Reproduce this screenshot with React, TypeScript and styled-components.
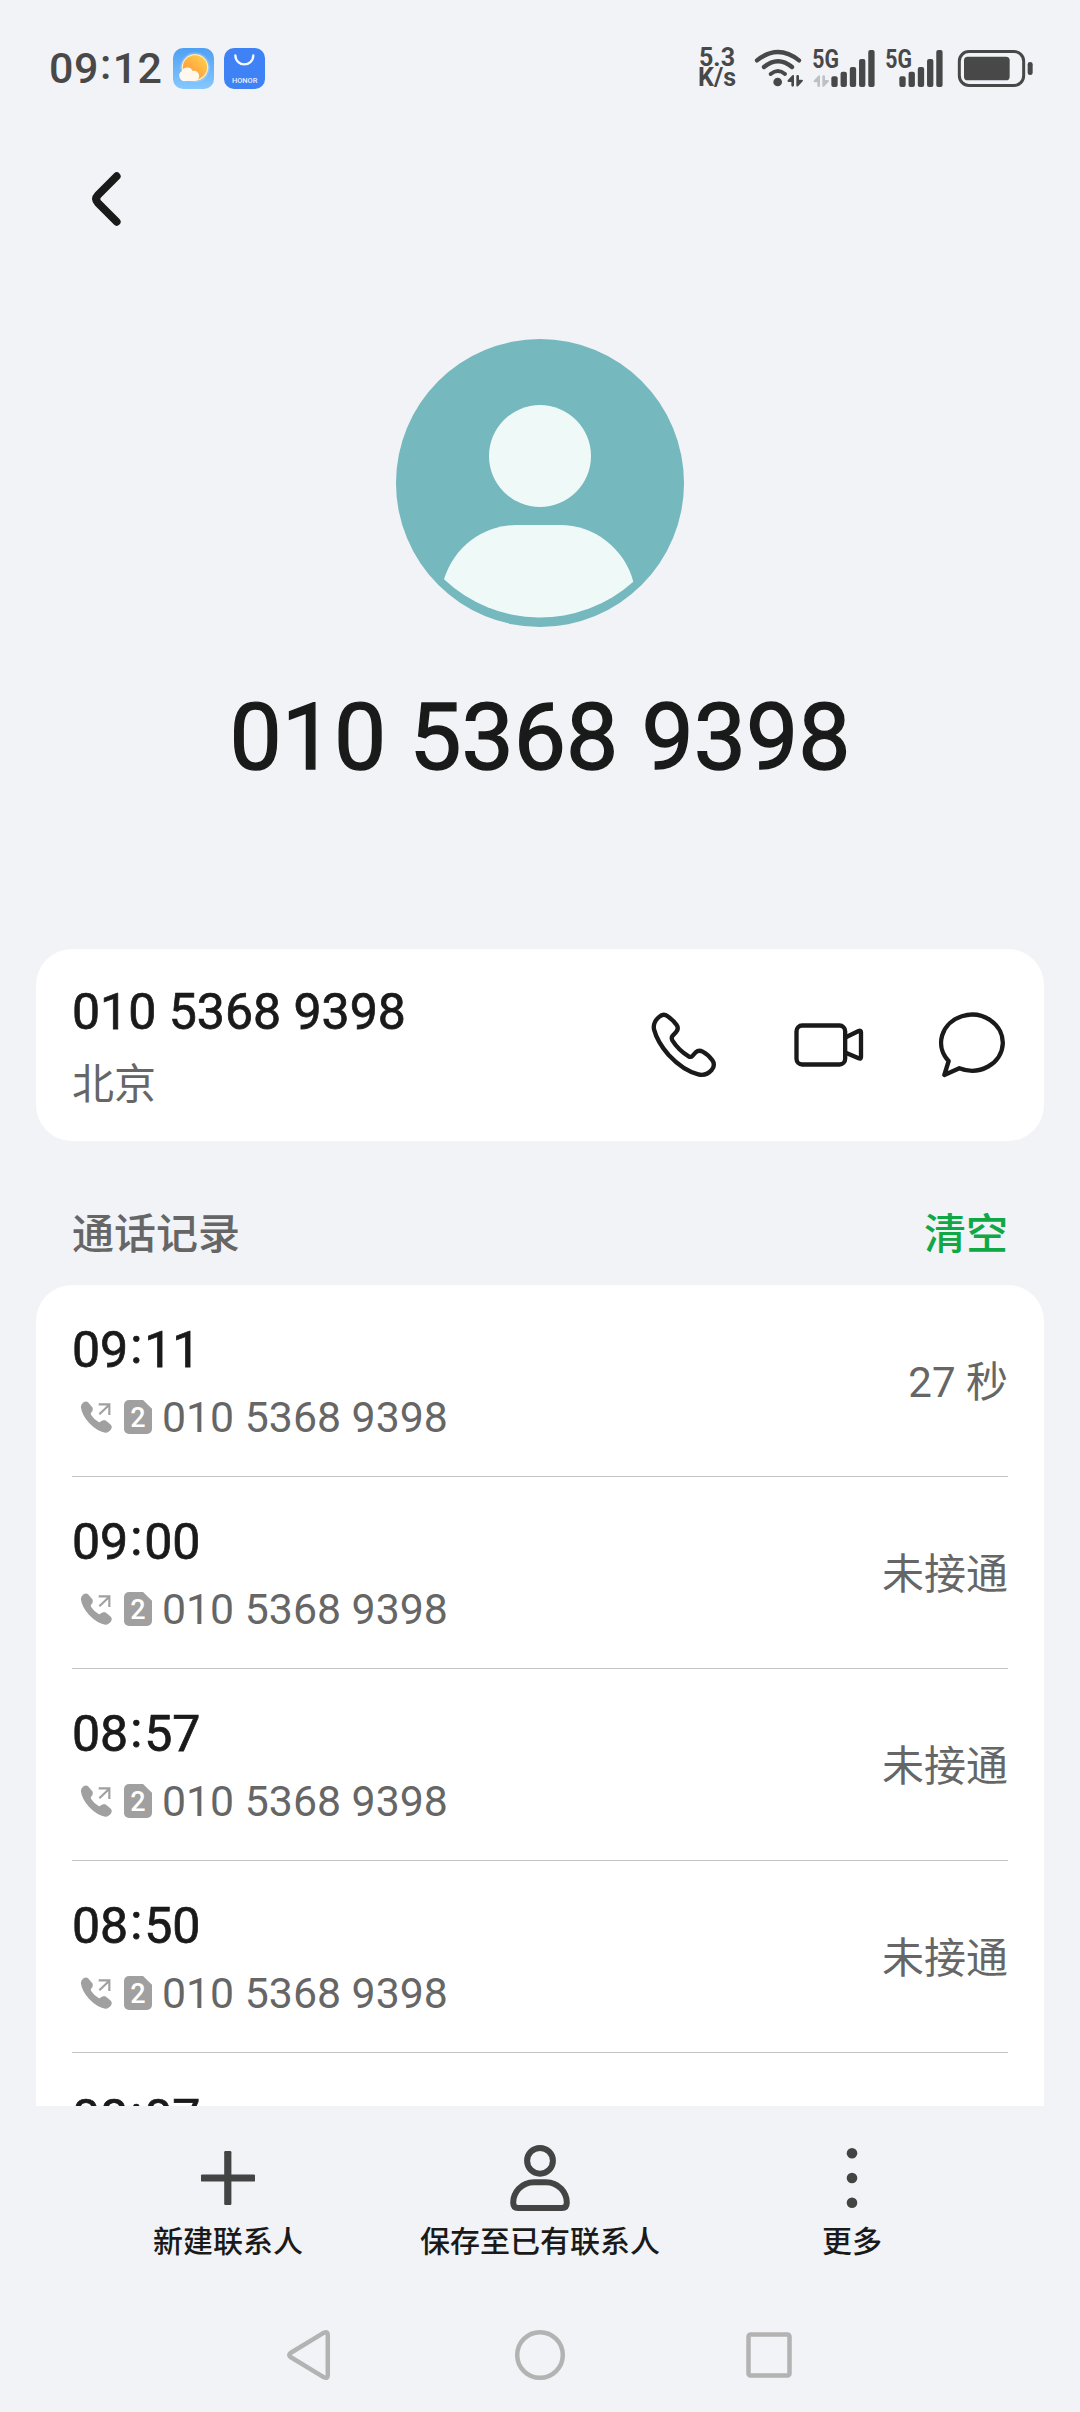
import React from 'react';
import styled, { createGlobalStyle } from 'styled-components';

const ink = '#1a1a1a';
const muted = '#666666';
const statusInk = '#484848';
const canvas = '#f1f3f7';

const GlobalStyle = createGlobalStyle`
  * { box-sizing: border-box; }
  body {
    margin: 0;
    background: ${canvas};
    font-family: Roboto, 'Noto Sans CJK SC', sans-serif;
    color: ${ink};
  }
`;

const Screen = styled.div`
  width: 1080px;
  height: 2412px;
  display: flex;
  flex-direction: column;
  overflow: hidden;
  background: ${canvas};
`;

const StatusBar = styled.div`
  flex: none;
  height: 137px;
  padding: 0 45px 0 48px;
  display: flex;
  align-items: center;
  justify-content: space-between;
  color: ${statusInk};
`;

const StatusGroup = styled.div<{ $gap: number }>`
  display: flex;
  align-items: center;
  gap: ${(p) => p.$gap}px;
`;

const Clock = styled.span`
  width: 115px;
  padding: 0 0 2px 1px;
  font-size: 43px;
  line-height: 50px;
  font-weight: 500;
  letter-spacing: 0.5px;
  white-space: nowrap;
`;

const ColonMark = styled.span`
  display: inline-block;
  width: 0.32em;
  line-height: 0;
  text-align: center;
  vertical-align: 0.085em;
  letter-spacing: 0;
`;

const NetSpeed = styled.div`
  width: 42px;
  margin-right: 8px;
  padding-bottom: 1px;
  display: flex;
  flex-direction: column;
  align-items: center;
  font-size: 25px;
  line-height: 20px;
  font-weight: 700;
`;

const Glyph = styled.svg`
  display: block;
  flex: none;
  overflow: visible;
`;

const TopBar = styled.div`
  flex: none;
  height: 124px;
  padding-left: 72px;
  display: flex;
  align-items: center;
`;

const Profile = styled.div`
  flex: none;
  height: 688px;
  padding-top: 78px;
  display: flex;
  flex-direction: column;
  align-items: center;
  gap: 55px;
`;

const DisplayNumber = styled.div`
  font-size: 93px;
  line-height: 112px;
  -webkit-text-stroke: 0.015em currentColor;
  white-space: nowrap;
`;

const NumberCard = styled.div`
  flex: none;
  height: 192px;
  margin: 0 36px;
  padding: 0 36px;
  display: flex;
  align-items: center;
  justify-content: space-between;
  border-radius: 36px;
  background: #fff;
`;

const Stack = styled.div<{ $gap: number }>`
  padding-top: 6px;
  display: flex;
  flex-direction: column;
  gap: ${(p) => p.$gap}px;
`;

const Title = styled.div`
  height: 60px;
  font-size: 50px;
  line-height: 60px;
  -webkit-text-stroke: 0.015em currentColor;
  white-space: nowrap;
`;

const Caption = styled.div`
  font-size: 42px;
  line-height: 60px;
  color: ${muted};
  white-space: nowrap;
`;

const CallResult = styled(Caption)`
  padding-top: 4px;
`;

const Actions = styled.div`
  display: flex;
  gap: 72px;
`;

const SectionHead = styled.div`
  flex: none;
  height: 144px;
  padding: 42px 72px 0;
  display: flex;
  justify-content: space-between;
  font-size: 42px;
  line-height: 104px;
  font-weight: 500;
  color: ${muted};
`;

const ClearLink = styled.span`
  color: #10a745;
`;

const LogViewport = styled.div`
  flex: none;
  height: 821px;
  margin: 0 36px;
  overflow: hidden;
  border-radius: 36px 36px 0 0;
  background: #fff;
`;

const LogRow = styled.div`
  height: 192px;
  margin: 0 36px;
  display: flex;
  align-items: center;
  justify-content: space-between;
  border-bottom: 1px solid #c4c4c6;
`;

const LogDetail = styled.div`
  height: 60px;
  padding-left: 6px;
  display: flex;
  align-items: center;
  font-size: 42.8px;
  line-height: 60px;
  color: ${muted};
  white-space: nowrap;
`;

const SimBadge = styled.span`
  width: 28px;
  height: 34px;
  margin: 0 10px;
  display: flex;
  align-items: center;
  justify-content: center;
  border-radius: 5px;
  clip-path: polygon(0 0, 68% 0, 100% 26%, 100% 100%, 0 100%);
  background: #a0a0a0;
  color: #fff;
  font-size: 27px;
  line-height: 34px;
  font-weight: 500;
  padding-top: 2px;
`;

const ToolBar = styled.div`
  flex: none;
  height: 192px;
  padding: 36px 72px 0;
  display: grid;
  grid-template-columns: repeat(3, 312px);
`;

const Tool = styled.div`
  display: flex;
  flex-direction: column;
  align-items: center;
  gap: 6px;
  font-size: 30px;
  line-height: 44px;
  font-weight: 500;
  white-space: nowrap;
`;

const NavBar = styled.div`
  flex: none;
  height: 114px;
  display: flex;
  align-items: center;
  justify-content: center;
  gap: 169px;
`;

const Colon = () => <ColonMark>:</ColonMark>;

const Time = ({ value }: { value: string }) => {
  const [h, m] = value.split(':');
  return (
    <>
      {h}
      <Colon />
      {m}
    </>
  );
};

const WeatherIcon = () => (
  <Glyph width="41" height="41" viewBox="0 0 123 123">
    <defs>
      <linearGradient id="sky" x1="0" y1="0" x2="0" y2="1">
        <stop offset="0" stopColor="#4f9ff3" />
        <stop offset="1" stopColor="#86c8ff" />
      </linearGradient>
      <linearGradient id="sun" x1="0.8" y1="0.1" x2="0.2" y2="0.8">
        <stop offset="0" stopColor="#ffc94a" />
        <stop offset="1" stopColor="#ff9c3b" />
      </linearGradient>
    </defs>
    <rect width="123" height="123" rx="30" fill="url(#sky)" />
    <circle cx="66" cy="58" r="45" fill="#fff" opacity="0.18" />
    <circle cx="66" cy="58" r="40" fill="#ffeeb0" />
    <circle cx="66" cy="58" r="36" fill="url(#sun)" />
    <path d="M38 99a16 16 0 0 1-12-29a18 18 0 0 1 33-1a15 15 0 0 1 8 30z" fill="#fff8ee" />
  </Glyph>
);

const StoreIcon = () => (
  <Glyph width="41" height="41" viewBox="0 0 123 123">
    <rect width="123" height="123" rx="30" fill="#3f82f6" />
    <path d="M34 22C35 58 87 58 88 22" fill="none" stroke="#f4f9ff" strokeWidth="7" strokeLinecap="round" />
    <text
      x="24"
      y="104"
      fontSize="21"
      fontWeight="500"
      fill="#e8f1ff"
      textLength="76"
      lengthAdjust="spacingAndGlyphs"
    >
      HONOR
    </text>
  </Glyph>
);

const DataArrows = ({ x, y, color }: { x: number; y: number; color: string }) => (
  <path
    transform={`translate(${x} ${y})`}
    d="M1 17L15 2Q20 -1 20 4V32Q20 36 16 36Q12 36 12 32V22H3Q-1 21 1 17ZM27 4Q27 1 31 1Q35 1 35 4V15H44Q49 16 46 20L33 34Q27 38 27 32Z"
    fill={color}
  />
);

const WifiIcon = () => (
  <Glyph width="50" height="40" viewBox="222 54 150 120">
    <g fill="none" stroke={statusInk} strokeWidth="13" strokeLinecap="round">
      <path d="M231 88Q294 38 357 88" />
      <path d="M252 108Q294 73 336 108" />
      <path d="M272 129Q294 111 315 129" strokeWidth="12" />
    </g>
    <circle cx="293" cy="153" r="13" fill={statusInk} />
    <DataArrows x={322} y={131} color={statusInk} />
  </Glyph>
);

const SignalIcon = ({ width, barStart, data }: { width: number; barStart: number; data?: boolean }) => (
  <Glyph width={width} height="40" viewBox={`0 54 ${width * 3} 120`}>
    <text
      x="1"
      y="111"
      fontSize="76"
      fontWeight="700"
      fill={statusInk}
      textLength="80"
      lengthAdjust="spacingAndGlyphs"
    >
      5G
    </text>
    {data && <DataArrows x={4} y={132} color="#bfc0c2" />}
    {[136, 122, 108, 84, 57].map((top, i) => (
      <rect key={top} x={barStart + i * 27.7} y={top} width="19" height={168 - top} rx="6" fill={statusInk} />
    ))}
  </Glyph>
);

const BatteryIcon = () => (
  <Glyph width="79" height="40" viewBox="828 54 237 120">
    <rect x="838" y="61.5" width="193" height="102" rx="29" fill="none" stroke={statusInk} strokeWidth="9" />
    <rect x="852" y="77" width="137" height="71" rx="11" fill={statusInk} />
    <rect x="1043" y="93" width="15" height="39" rx="7" fill={statusInk} />
  </Glyph>
);

const BackIcon = () => (
  <Glyph width="72" height="72" viewBox="0 0 72 72">
    <path
      d="M44.7 13.2L26 32Q22.2 36 26 40L44.7 58.8"
      fill="none"
      stroke={ink}
      strokeWidth="7.8"
      strokeLinecap="round"
    />
  </Glyph>
);

const Avatar = () => (
  <Glyph width="288" height="288" viewBox="396 339 288 288">
    <circle cx="540" cy="483" r="144" fill="#75b8be" />
    <circle cx="540" cy="456" r="51" fill="#eff9f8" />
    <path
      d="M516 525H560A76 76 0 0 1 633.3 581.7A139.5 139.5 0 0 1 444 579.3A76 76 0 0 1 516 525Z"
      fill="#eff9f8"
    />
  </Glyph>
);

const lineProps = {
  fill: 'none',
  stroke: ink,
  strokeWidth: 13,
  strokeLinejoin: 'round' as const,
  strokeLinecap: 'round' as const,
};

const CallIcon = () => (
  <Glyph width="72" height="72" viewBox="84 207 216 216" {...lineProps}>
    <path d="M117 231Q130 219 143 229Q160 241 170 255Q177 265 169 275L158 287Q153 293 157 301Q175 330 206 349Q212 353 218 347L227 337Q236 329 248 335Q265 344 277 361Q287 375 275 390Q258 409 235 403Q190 392 146 345Q112 306 102 268Q98 248 117 231Z" />
  </Glyph>
);

const VideoIcon = () => (
  <Glyph width="72" height="72" viewBox="516 207 216 216" {...lineProps}>
    <rect x="529.5" y="256.5" width="146" height="117" rx="17" />
    <path d="M679 291L716 273Q723 270 723 277V351Q723 358 716 355L679 339" />
  </Glyph>
);

const MessageIcon = () => (
  <Glyph width="72" height="72" viewBox="948 207 216 216" {...lineProps}>
    <path d="M1018 384.6A92.5 84 0 1 0 986 363L973 405Z" />
  </Glyph>
);

const OutgoingIcon = () => (
  <Glyph width="36" height="36" viewBox="144 624 108 108">
    <path
      d="M153 650Q152 640 162 633Q168 629 174 634L187 649Q191 656 187 661L183 665Q181 669 184 673Q193 687 206 693Q209 695 213 691Q218 686 226 688L240 699Q248 706 244 713Q238 724 226 725Q205 724 178 697Q155 670 153 650Z"
      fill="#a0a0a0"
    />
    <path d="M208 670L238 641M206 640H238V672" fill="none" stroke="#a0a0a0" strokeWidth="6.5" />
  </Glyph>
);

const PlusIcon = () => (
  <Glyph width="72" height="72" viewBox="0 0 72 72" fill="#444">
    <rect x="9" y="32.4" width="54" height="7.2" rx="1.2" />
    <rect x="32.2" y="9" width="7.2" height="54" rx="1.2" />
  </Glyph>
);

const PersonIcon = () => (
  <Glyph width="72" height="72" viewBox="0 0 72 72" fill="none" stroke="#444" strokeWidth="6">
    <circle cx="36" cy="18.8" r="12.9" />
    <path d="M30 40.2H42C55 40.2 62.8 51 62.8 60.5Q62.8 66 58 66H14Q9.2 66 9.2 60.5C9.2 51 17 40.2 30 40.2Z" />
  </Glyph>
);

const MoreIcon = () => (
  <Glyph width="72" height="72" viewBox="0 0 72 72" fill="#444">
    <circle cx="36" cy="11.3" r="5.3" />
    <circle cx="36" cy="36" r="5.3" />
    <circle cx="36" cy="60.7" r="5.3" />
  </Glyph>
);

const navProps = {
  width: 60,
  height: 60,
  viewBox: '0 0 60 60',
  fill: 'none',
  stroke: '#b3b3b3',
  strokeWidth: 4.5,
  strokeLinejoin: 'round' as const,
};

const calls = [
  { time: '09:11', result: '27 秒' },
  { time: '09:00', result: '未接通' },
  { time: '08:57', result: '未接通' },
  { time: '08:50', result: '未接通' },
  { time: '08:07', result: '未接通' },
];

const phone = '010 5368 9398';

export default function App() {
  return (
    <Screen>
      <GlobalStyle />
      <StatusBar>
        <StatusGroup $gap={10}>
          <Clock>
            <Time value="09:12" />
          </Clock>
          <WeatherIcon />
          <StoreIcon />
        </StatusGroup>
        <StatusGroup $gap={8}>
          <NetSpeed>
            <span>5.3</span>
            <span>K/s</span>
          </NetSpeed>
          <WifiIcon />
          <SignalIcon width={65} barStart={58} data />
          <SignalIcon width={63} barStart={43} />
          <BatteryIcon />
        </StatusGroup>
      </StatusBar>
      <TopBar>
        <BackIcon />
      </TopBar>
      <Profile>
        <Avatar />
        <DisplayNumber>{phone}</DisplayNumber>
      </Profile>
      <NumberCard>
        <Stack $gap={13}>
          <Title>{phone}</Title>
          <Caption>北京</Caption>
        </Stack>
        <Actions>
          <CallIcon />
          <VideoIcon />
          <MessageIcon />
        </Actions>
      </NumberCard>
      <SectionHead>
        <span>通话记录</span>
        <ClearLink>清空</ClearLink>
      </SectionHead>
      <LogViewport>
        {calls.map((call) => (
          <LogRow key={call.time}>
            <Stack $gap={7}>
              <Title>
                <Time value={call.time} />
              </Title>
              <LogDetail>
                <OutgoingIcon />
                <SimBadge>2</SimBadge>
                {phone}
              </LogDetail>
            </Stack>
            <CallResult>{call.result}</CallResult>
          </LogRow>
        ))}
      </LogViewport>
      <ToolBar>
        <Tool>
          <PlusIcon />
          新建联系人
        </Tool>
        <Tool>
          <PersonIcon />
          保存至已有联系人
        </Tool>
        <Tool>
          <MoreIcon />
          更多
        </Tool>
      </ToolBar>
      <NavBar>
        <Glyph {...navProps}>
          <path d="M9.5 28L43 7.7Q46.8 6 46.8 10V50Q46.8 54 43 52.3L9.5 32Q7 30 9.5 28Z" />
        </Glyph>
        <Glyph {...navProps}>
          <circle cx="30" cy="30" r="22.8" />
        </Glyph>
        <Glyph {...navProps}>
          <rect x="9.5" y="9.5" width="41" height="41" rx="2" />
        </Glyph>
      </NavBar>
    </Screen>
  );
}
